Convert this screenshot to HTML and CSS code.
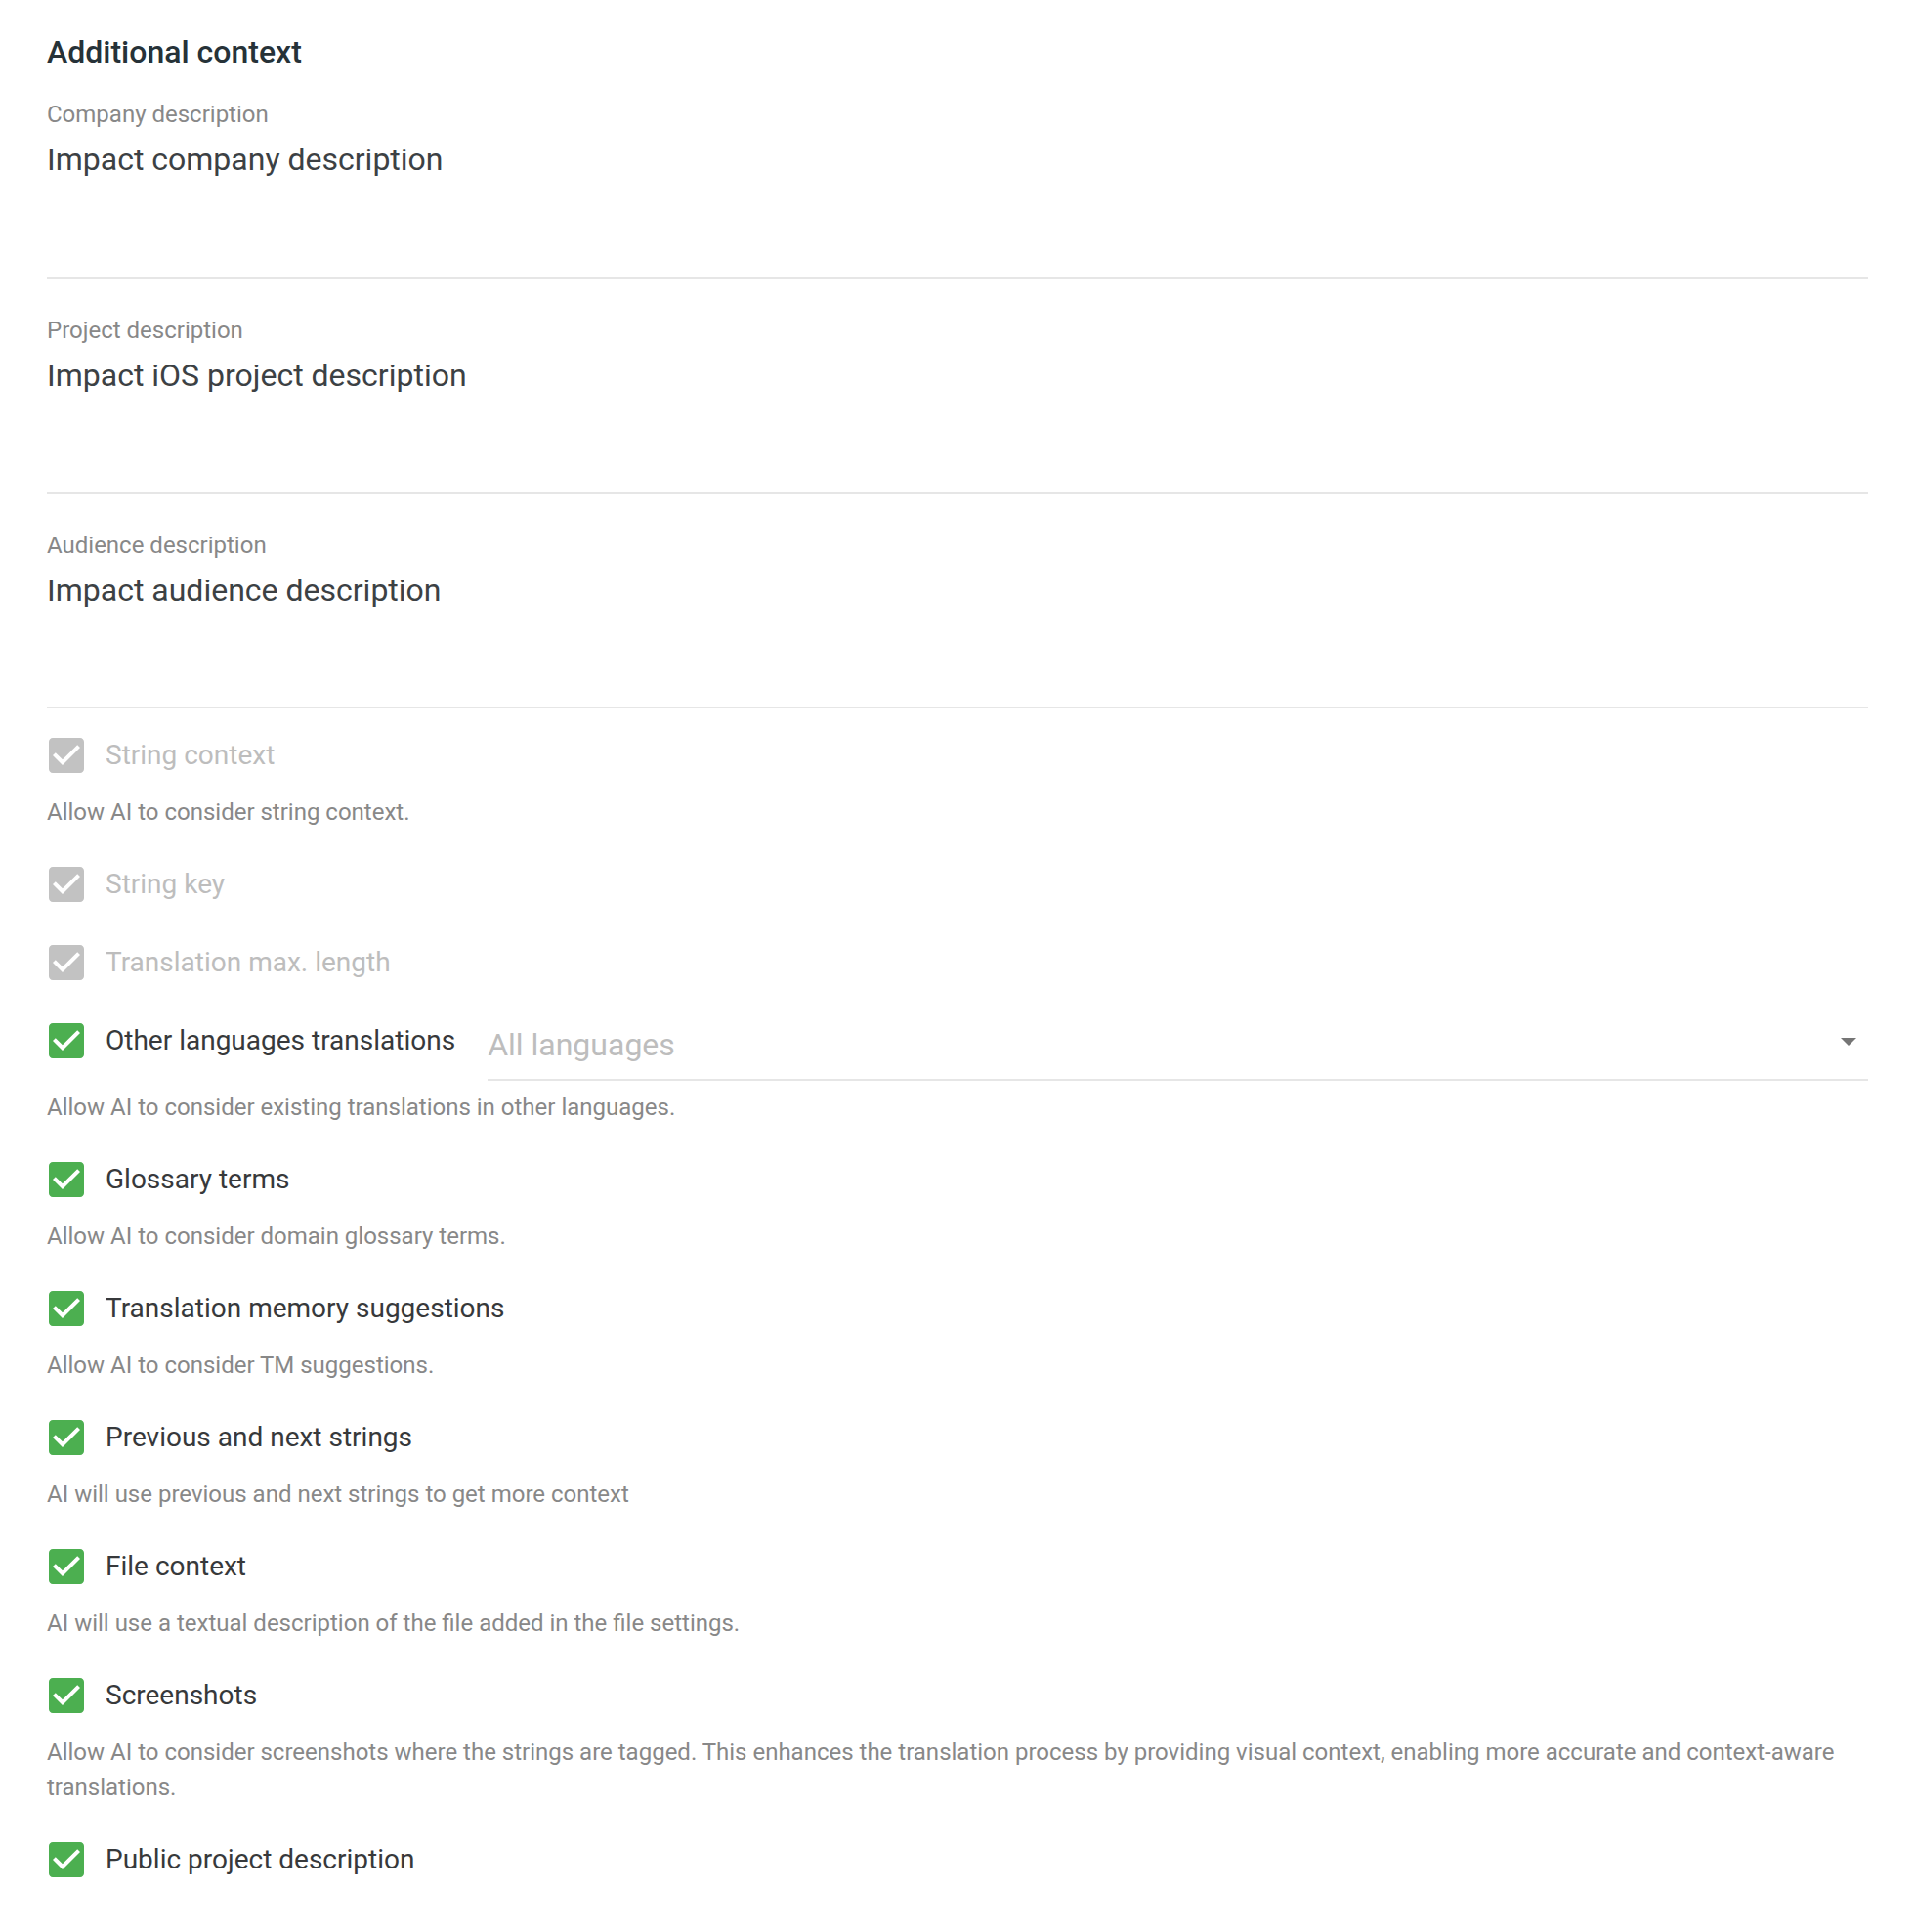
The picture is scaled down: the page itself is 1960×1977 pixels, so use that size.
FILE: index.html
```html
<!DOCTYPE html>
<html lang="en">
<head>
    <meta charset="UTF-8">
    <meta name="viewport" content="width=device-width, initial-scale=1.0">
    <title>Additional context</title>
    <link rel="stylesheet" href="styles.css">
</head>
<body>
    <div class="settings">
        <h2 class="section-title">Additional context</h2>

        <div class="field">
            <label class="field-label">Company description</label>
            <div class="field-input">Impact company description</div>
        </div>
        <div class="field">
            <label class="field-label">Project description</label>
            <div class="field-input">Impact iOS project description</div>
        </div>
        <div class="field">
            <label class="field-label">Audience description</label>
            <div class="field-input">Impact audience description</div>
        </div>

        <div class="options">
            <div class="option">
                <div class="option-row disabled">
                    <span class="checkbox"><svg viewBox="3 3 18 18"><path d="M19 3H5c-1.11 0-2 .9-2 2v14c0 1.1.89 2 2 2h14c1.11 0 2-.9 2-2V5c0-1.1-.89-2-2-2zm-9 14l-5-5 1.41-1.41L10 14.17l7.59-7.59L19 8l-9 9z"/></svg></span>
                    <span class="option-label">String context</span>
                </div>
                <p class="option-hint">Allow AI to consider string context.</p>
            </div>

            <div class="option">
                <div class="option-row disabled">
                    <span class="checkbox"><svg viewBox="3 3 18 18"><path d="M19 3H5c-1.11 0-2 .9-2 2v14c0 1.1.89 2 2 2h14c1.11 0 2-.9 2-2V5c0-1.1-.89-2-2-2zm-9 14l-5-5 1.41-1.41L10 14.17l7.59-7.59L19 8l-9 9z"/></svg></span>
                    <span class="option-label">String key</span>
                </div>
            </div>

            <div class="option">
                <div class="option-row disabled">
                    <span class="checkbox"><svg viewBox="3 3 18 18"><path d="M19 3H5c-1.11 0-2 .9-2 2v14c0 1.1.89 2 2 2h14c1.11 0 2-.9 2-2V5c0-1.1-.89-2-2-2zm-9 14l-5-5 1.41-1.41L10 14.17l7.59-7.59L19 8l-9 9z"/></svg></span>
                    <span class="option-label">Translation max. length</span>
                </div>
            </div>

            <div class="option">
                <div class="option-row with-select">
                    <span class="checkbox"><svg viewBox="3 3 18 18"><path d="M19 3H5c-1.11 0-2 .9-2 2v14c0 1.1.89 2 2 2h14c1.11 0 2-.9 2-2V5c0-1.1-.89-2-2-2zm-9 14l-5-5 1.41-1.41L10 14.17l7.59-7.59L19 8l-9 9z"/></svg></span>
                    <span class="option-label">Other languages translations</span>
                    <div class="select">
                        <span class="select-value">All languages</span>
                        <span class="select-arrow"></span>
                    </div>
                </div>
                <p class="option-hint tight">Allow AI to consider existing translations in other languages.</p>
            </div>

            <div class="option">
                <div class="option-row">
                    <span class="checkbox"><svg viewBox="3 3 18 18"><path d="M19 3H5c-1.11 0-2 .9-2 2v14c0 1.1.89 2 2 2h14c1.11 0 2-.9 2-2V5c0-1.1-.89-2-2-2zm-9 14l-5-5 1.41-1.41L10 14.17l7.59-7.59L19 8l-9 9z"/></svg></span>
                    <span class="option-label">Glossary terms</span>
                </div>
                <p class="option-hint">Allow AI to consider domain glossary terms.</p>
            </div>

            <div class="option">
                <div class="option-row">
                    <span class="checkbox"><svg viewBox="3 3 18 18"><path d="M19 3H5c-1.11 0-2 .9-2 2v14c0 1.1.89 2 2 2h14c1.11 0 2-.9 2-2V5c0-1.1-.89-2-2-2zm-9 14l-5-5 1.41-1.41L10 14.17l7.59-7.59L19 8l-9 9z"/></svg></span>
                    <span class="option-label">Translation memory suggestions</span>
                </div>
                <p class="option-hint">Allow AI to consider TM suggestions.</p>
            </div>

            <div class="option">
                <div class="option-row">
                    <span class="checkbox"><svg viewBox="3 3 18 18"><path d="M19 3H5c-1.11 0-2 .9-2 2v14c0 1.1.89 2 2 2h14c1.11 0 2-.9 2-2V5c0-1.1-.89-2-2-2zm-9 14l-5-5 1.41-1.41L10 14.17l7.59-7.59L19 8l-9 9z"/></svg></span>
                    <span class="option-label">Previous and next strings</span>
                </div>
                <p class="option-hint">AI will use previous and next strings to get more context</p>
            </div>

            <div class="option">
                <div class="option-row">
                    <span class="checkbox"><svg viewBox="3 3 18 18"><path d="M19 3H5c-1.11 0-2 .9-2 2v14c0 1.1.89 2 2 2h14c1.11 0 2-.9 2-2V5c0-1.1-.89-2-2-2zm-9 14l-5-5 1.41-1.41L10 14.17l7.59-7.59L19 8l-9 9z"/></svg></span>
                    <span class="option-label">File context</span>
                </div>
                <p class="option-hint">AI will use a textual description of the file added in the file settings.</p>
            </div>

            <div class="option">
                <div class="option-row">
                    <span class="checkbox"><svg viewBox="3 3 18 18"><path d="M19 3H5c-1.11 0-2 .9-2 2v14c0 1.1.89 2 2 2h14c1.11 0 2-.9 2-2V5c0-1.1-.89-2-2-2zm-9 14l-5-5 1.41-1.41L10 14.17l7.59-7.59L19 8l-9 9z"/></svg></span>
                    <span class="option-label">Screenshots</span>
                </div>
                <p class="option-hint">Allow AI to consider screenshots where the strings are tagged. This enhances the translation process by providing visual context, enabling more accurate and context-aware translations.</p>
            </div>

            <div class="option">
                <div class="option-row">
                    <span class="checkbox"><svg viewBox="3 3 18 18"><path d="M19 3H5c-1.11 0-2 .9-2 2v14c0 1.1.89 2 2 2h14c1.11 0 2-.9 2-2V5c0-1.1-.89-2-2-2zm-9 14l-5-5 1.41-1.41L10 14.17l7.59-7.59L19 8l-9 9z"/></svg></span>
                    <span class="option-label">Public project description</span>
                </div>
            </div>
        </div>
    </div>
</body>
</html>
```

FILE: styles.css
```css
body {
    margin: 0;
    background-color: #ffffff;
    font-family: Roboto, 'Liberation Sans', sans-serif;
}

.settings {
    padding: 33px 48px 40px;
}

.section-title {
    margin: 0;
    font-size: 32px;
    line-height: 40px;
    font-weight: 500;
    color: #263238;
}

.field {
    padding-top: 37px;
    border-bottom: 2px solid #e6e6e6;
}

.section-title + .field {
    padding-top: 28px;
}

.field-label {
    display: block;
    font-size: 24px;
    line-height: 32px;
    color: #888888;
}

.field-input {
    margin-top: 10px;
    height: 139px;
    font-size: 32px;
    line-height: 40px;
    color: #3c4144;
}

.section-title + .field .field-input {
    height: 140px;
}

.options {
    display: flex;
    flex-direction: column;
    gap: 32px;
    padding-top: 24px;
}

.option-row {
    display: flex;
    align-items: center;
    gap: 24px;
}

.option-row.with-select {
    align-items: flex-start;
}

.checkbox {
    display: flex;
    align-items: center;
    height: 48px;
    margin-left: 2px;
    margin-right: -2px;
}

.checkbox svg {
    width: 36px;
    height: 36px;
    fill: #4caf50;
}

.option-label {
    font-size: 28px;
    line-height: 48px;
    color: #37393b;
}

.disabled .checkbox svg {
    fill: #c2c2c2;
}

.disabled .option-label {
    color: #bdbdbd;
}

.option-hint {
    margin: 16px 0 0;
    font-size: 24px;
    line-height: 36px;
    color: #888888;
}

.option-hint.tight {
    margin-top: 9px;
}

.select {
    flex: 1;
    display: flex;
    align-items: center;
    justify-content: space-between;
    margin-left: 9px;
    padding: 8px 12px 15px 0;
    border-bottom: 2px solid #e6e6e6;
}

.select-value {
    font-size: 32px;
    line-height: 40px;
    color: #bdbdbd;
}

.select-arrow {
    width: 0;
    height: 0;
    margin-bottom: 6px;
    border-left: 8px solid transparent;
    border-right: 8px solid transparent;
    border-top: 8px solid #757575;
}
```
